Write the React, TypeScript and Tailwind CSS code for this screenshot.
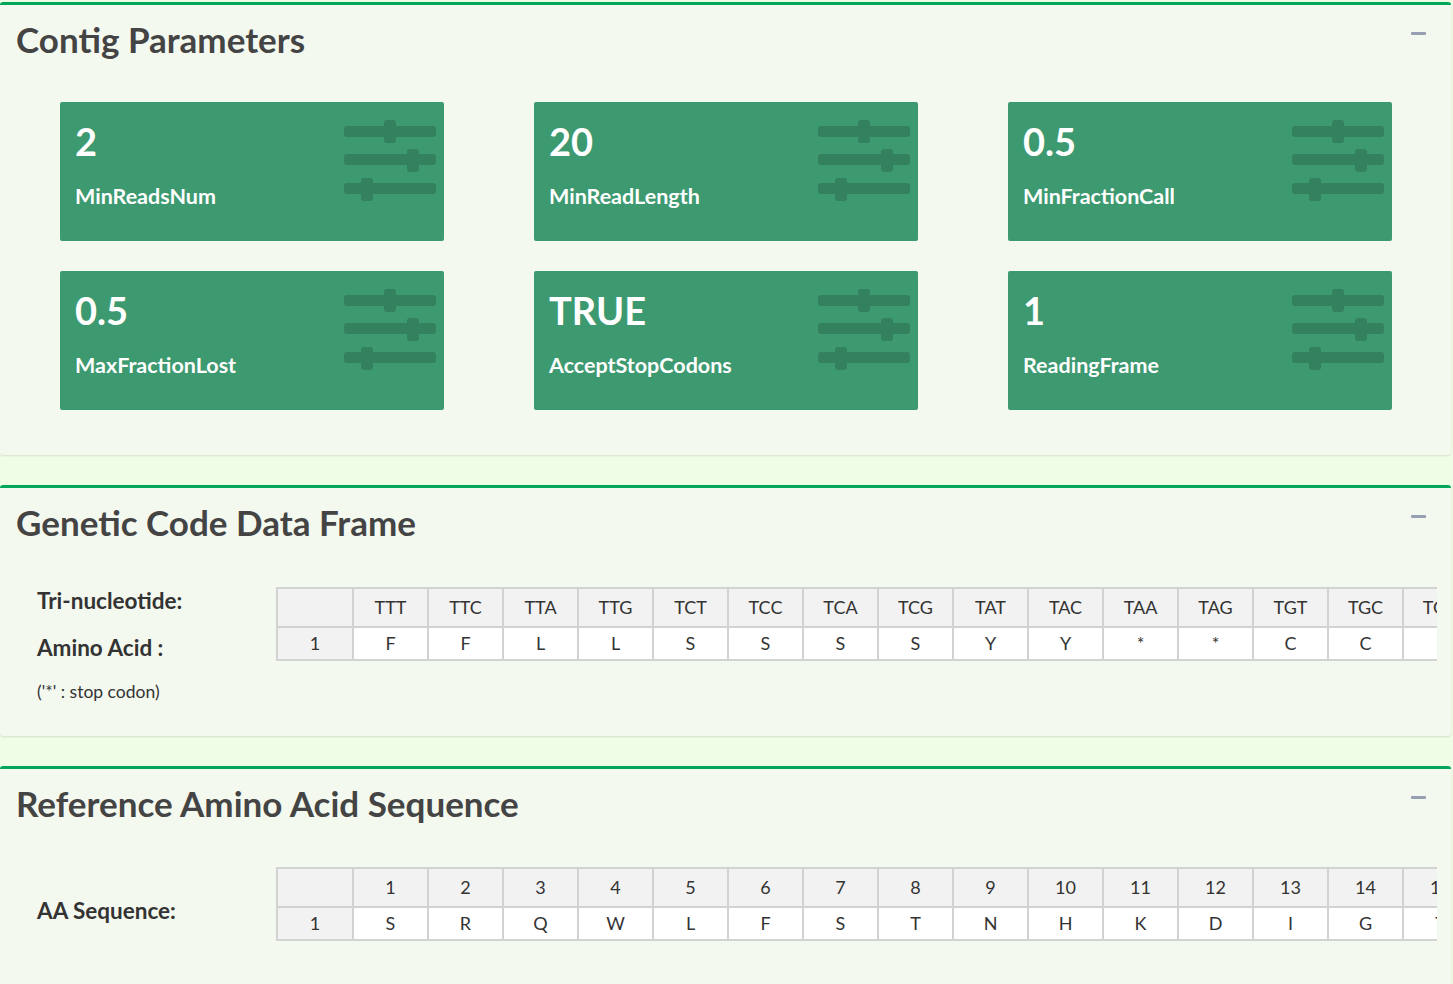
const codons = [
  "TTT", "TTC", "TTA", "TTG", "TCT", "TCC", "TCA", "TCG", "TAT", "TAC", "TAA", "TAG", "TGT", "TGC", "TGA", "TGG",
  "CTT", "CTC", "CTA", "CTG", "CCT", "CCC", "CCA", "CCG", "CAT", "CAC", "CAA", "CAG", "CGT", "CGC", "CGA", "CGG",
];
const aminos = "FFLLSSSSYY**CC*WLLLLPPPPHHQQRRRR".split("");
const aaSeq = "SRQWLFSTNHKDIGTLEVRA".split("");

const params = [
  { value: "2", label: "MinReadsNum" },
  { value: "20", label: "MinReadLength" },
  { value: "0.5", label: "MinFractionCall" },
  { value: "0.5", label: "MaxFractionLost" },
  { value: "TRUE", label: "AcceptStopCodons" },
  { value: "1", label: "ReadingFrame" },
];

function SlidersIcon() {
  return (
    <svg
      width="92"
      height="81"
      viewBox="0 0 92 81"
      className="absolute right-[8px] top-[18px]"
    >
      <g fill="black" opacity="0.15">
        <rect x="0" y="6" width="92" height="11" rx="3" />
        <rect x="0" y="34" width="92" height="11" rx="3" />
        <rect x="0" y="63" width="92" height="11" rx="3" />
        <rect x="40" y="0" width="12" height="23" rx="3" />
        <rect x="63" y="29" width="12" height="23" rx="3" />
        <rect x="17" y="58" width="12" height="23" rx="3" />
      </g>
    </svg>
  );
}

function Box({ title, children }: { title: string; children: React.ReactNode }) {
  return (
    <div className="mr-[2px] rounded-[3px] border-t-[3px] border-[#00a65a] bg-[#f4f9ef] shadow-[0_1px_2px_rgba(0,0,0,0.12)]">
      <div className="flex items-start justify-between pl-[16px] pr-[25px] pt-[13px]">
        <h3 className="text-[35px] font-bold leading-[42px] text-[#444]">{title}</h3>
        <span className="mt-[14px] block h-[3px] w-[15px] rounded-[1px] bg-[#97a0b3]" />
      </div>
      {children}
    </div>
  );
}

function DataTable({ head, row }: { head: string[]; row: string[] }) {
  return (
    <div className="w-[1161px] overflow-hidden">
      <table className="border-collapse text-[18px] text-[#333]">
        <thead>
          <tr className="h-[39px] bg-[#f2f2f2]">
            <th className="min-w-[76px] border-2 border-[#d2d2d2] font-normal" />
            {head.map((h, i) => (
              <th key={i} className="min-w-[75px] border-2 border-[#d2d2d2] px-1 text-center font-normal">
                {h}
              </th>
            ))}
          </tr>
        </thead>
        <tbody>
          <tr className="h-[33px]">
            <td className="border-2 border-[#d2d2d2] bg-[#f2f2f2] text-center">1</td>
            {row.map((c, i) => (
              <td key={i} className="border-2 border-[#d2d2d2] bg-white text-center">
                {c}
              </td>
            ))}
          </tr>
        </tbody>
      </table>
    </div>
  );
}

export default function App() {
  return (
    <div
      className="min-h-screen overflow-hidden bg-[#f0fde6] pt-[2px]"
      style={{ fontFamily: '"Source Sans Pro", Lato, "Noto Sans", sans-serif' }}
    >
      <Box title="Contig Parameters">
        <div className="grid grid-cols-3 gap-x-[90px] gap-y-[30px] pb-[45px] pl-[60px] pr-[59px] pt-[42px]">
          {params.map((p, i) => (
            <div key={i} className="relative h-[139px] rounded-[2px] bg-[#3d9970] px-[15px] pt-[14px] text-white">
              <div className="text-[38px] font-bold leading-[50px]">{p.value}</div>
              <div className="mt-[16px] text-[21.5px] font-bold leading-[28px]">{p.label}</div>
              <SlidersIcon />
            </div>
          ))}
        </div>
      </Box>

      <div className="h-[30px]" />

      <Box title="Genetic Code Data Frame">
        <div className="flex pb-[33px] pt-[44px]">
          <div className="w-[276px] pl-[37px] text-[22.5px] font-bold text-[#333]">
            <div className="mt-[0px] leading-[28px]">Tri-nucleotide:</div>
            <div className="mt-[19px] leading-[28px]">Amino Acid :</div>
            <div className="mt-[19px] text-[17.5px] font-normal leading-[22px]">('*' : stop codon)</div>
          </div>
          <DataTable head={codons} row={aminos} />
        </div>
      </Box>

      <div className="h-[30px]" />

      <Box title="Reference Amino Acid Sequence">
        <div className="flex items-center pb-[60px] pt-[43px]">
          <div className="w-[276px] pl-[37px] pt-[14px] text-[22.5px] font-bold text-[#333]">AA Sequence:</div>
          <DataTable head={aaSeq.map((_, i) => String(i + 1))} row={aaSeq} />
        </div>
      </Box>
    </div>
  );
}
